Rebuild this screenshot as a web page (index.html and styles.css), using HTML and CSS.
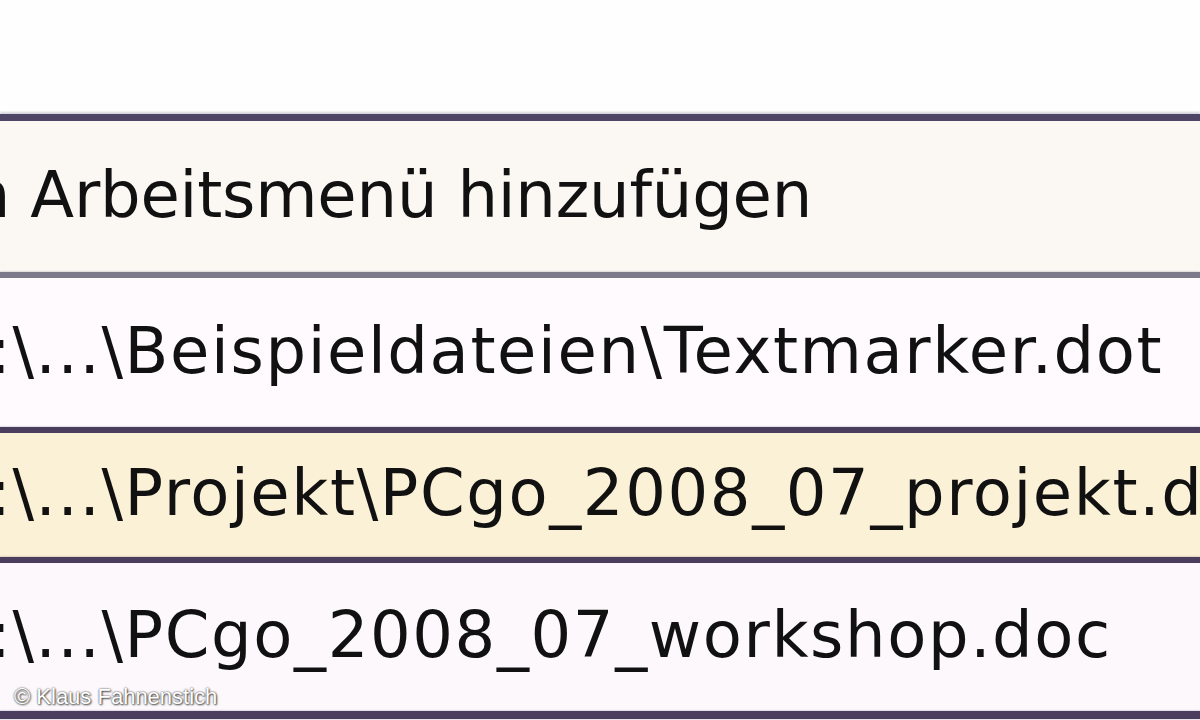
FILE: index.html
```html
<!DOCTYPE html>
<html lang="de">

<head>
    <meta charset="UTF-8">
    <meta name="viewport" content="width=device-width, initial-scale=1.0">
    <title>Arbeitsmenü</title>
    <link rel="stylesheet" href="styles.css">
</head>

<body>
    <div class="page">
        <div class="blank"></div>
        <div class="menu">
            <div class="item first">
                <span class="label add">Zum Arbeitsmenü hinzufügen</span>
            </div>
            <div class="sep light"></div>
            <div class="item second">
                <span class="label path">C:\...\Beispieldateien\Textmarker.dot</span>
            </div>
            <div class="sep"></div>
            <div class="item active">
                <span class="label path">C:\...\Projekt\PCgo_2008_07_projekt.doc</span>
            </div>
            <div class="sep"></div>
            <div class="item last">
                <span class="label path">C:\...\PCgo_2008_07_workshop.doc</span>
            </div>
            <div class="sep bottom"></div>
        </div>
        <div class="credit">© Klaus Fahnenstich</div>
    </div>
</body>

</html>
```

FILE: styles.css
```css
body,
html {
    height: 100%;
    margin: 0;
    background-color: #fefefe;
    overflow: hidden;
}

.page {
    position: relative;
    width: 1200px;
    height: 720px;
    display: flex;
    flex-direction: column;
}

.blank {
    height: 114px;
    background-color: #fefefe;
}

.menu {
    flex: 1;
    display: flex;
    flex-direction: column;
    border-top: 7px solid #4f4566;
    box-shadow: 0 -2px 2px rgba(90, 80, 120, 0.25);
}

.item {
    display: flex;
    align-items: center;
    overflow: hidden;
    white-space: nowrap;
    font-family: "DejaVu Sans", "Liberation Sans", sans-serif;
    font-size: 64px;
    color: #111;
}

.item.first {
    height: 151px;
    background-color: #fbf8f4;
}

.item.second {
    height: 149px;
    background-color: #fefafd;
}

.item.active {
    height: 124px;
    background-color: #fbf1d6;
    /* highlighted entry */
}

.item.last {
    height: 148px;
    background-color: #fcf8fc;
}

.label {
    display: block;
    line-height: 1;
    margin-top: -4px;
}

.label.add {
    margin-left: -136px;
    letter-spacing: -0.2px;
}

.label.path {
    margin-left: -57px;
    letter-spacing: 1.6px;
}

.sep {
    height: 6px;
    background-color: #4b3d5e;
    box-shadow: 0 0 2px rgba(75, 61, 94, 0.5);
}

.sep.light {
    background-color: #7c7a8a;
}

.sep.bottom {
    height: 8px;
}

.credit {
    position: absolute;
    left: 14px;
    top: 684px;
    font-family: "Liberation Sans", Arial, sans-serif;
    font-size: 22px;
    color: #fff;
    text-shadow: 0 0 2px #333, 1px 1px 2px #555;
}
```
